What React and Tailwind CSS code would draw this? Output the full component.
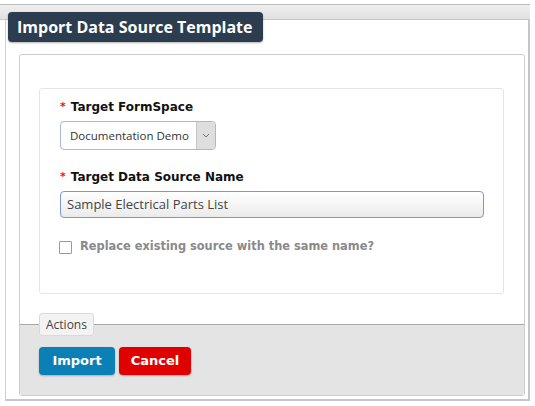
import React from "react";

export default function App() {
  return (
    <div className="w-[535px] h-[406px] bg-white pt-[4px] relative overflow-hidden">
      {/* header strip */}
      <div className="w-[530px] h-[16px] border-t border-b border-t-[#bcbcbc] border-b-[#c9c9c9] bg-gradient-to-b from-[#efefef] to-[#e1e1e1]" />
      {/* title tab */}
      <div
        className="absolute left-[8px] top-[12px] w-[255px] h-[30px] rounded-[4px] bg-[#2b3d4f] text-white font-bold text-[16px] leading-[30px] pl-[9px] shadow-[0_1px_2px_rgba(0,0,0,0.3)]"
        style={{ fontFamily: '"Open Sans", sans-serif' }}
      >
        Import Data Source Template
      </div>
      {/* body */}
      <div className="ml-[5px] w-[525px] h-[381px] border-l border-r-2 border-b-2 border-l-[#cfcfcf] border-r-[#c6c6c6] border-b-[#c6c6c6] pl-[13px] pr-[4px] pt-[34px]">
        <div className="w-[506px] h-[342px] border border-[#cdcdcd] rounded-[3px] overflow-hidden flex flex-col">
          <div className="pt-[33px] pl-[19px] pr-[20px]">
            <div
              className="h-[206px] border border-[#e4e4e4] rounded-[3px] pl-[20px] pr-[19px] pt-[10px]"
              style={{ fontFamily: '"DejaVu Sans", Verdana, sans-serif' }}
            >
              <div className="h-[16px] flex items-center text-[12px] font-bold text-[#111]">
                <span className="text-[#e02020] mr-[5px] text-[11px]">*</span>
                <span>Target FormSpace</span>
              </div>
              <div className="mt-[6px] w-[156px] h-[29px] border border-[#aab6d3] rounded-[4px] flex overflow-hidden bg-white">
                <div
                  className="flex-1 flex items-center pl-[9px] text-[11.5px] text-[#333] whitespace-nowrap overflow-hidden"
                  style={{ fontFamily: '"Open Sans", sans-serif' }}
                >
                  Documentation Demo
                </div>
                <div className="w-[19px] shrink-0 bg-[#dedede] border-l border-[#c8c8c8] flex items-center justify-center">
                  <svg width="8" height="5" viewBox="0 0 8 5">
                    <path d="M1 1 L4 4 L7 1" fill="none" stroke="#777" strokeWidth="1" />
                  </svg>
                </div>
              </div>
              <div className="mt-[19px] h-[16px] flex items-center text-[12px] font-bold text-[#111]">
                <span className="text-[#e02020] mr-[5px] text-[11px]">*</span>
                <span>Target Data Source Name</span>
              </div>
              <div
                className="mt-[6px] w-[424px] h-[27px] border border-[#7d97d6] rounded-[4px] bg-gradient-to-b from-white to-[#ebebeb] flex items-center pl-[6px] text-[13px] text-[#444]"
                style={{ fontFamily: '"Open Sans", sans-serif' }}
              >
                Sample Electrical Parts List
              </div>
              <div className="mt-[21px] h-[16px] flex items-center">
                <div className="w-[13px] h-[13px] border border-[#9a9a9a] rounded-[1px] bg-white ml-[-1px]" />
                <span className="ml-[8px] text-[11.4px] font-bold text-[#8a8a8a]">
                  Replace existing source with the same name?
                </span>
              </div>
            </div>
          </div>
          <div className="mt-[30px] flex-1 bg-[#e4e4e4] border-t border-[#a9a9a9] relative pl-[19px] pt-[22px]">
            <div
              className="absolute left-[19px] top-[-12px] h-[23px] px-[6px] bg-[#f3f3f3] border border-[#dadada] rounded-[3px] text-[12px] text-[#444] leading-[21px]"
              style={{ fontFamily: '"Open Sans", sans-serif' }}
            >
              Actions
            </div>
            <div className="flex gap-[4px]" style={{ fontFamily: '"DejaVu Sans", Verdana, sans-serif' }}>
              <div className="w-[76px] h-[28px] rounded-[4px] bg-[#0a80b6] text-white font-bold text-[13px] flex items-center justify-center shadow-[0_1px_2px_rgba(0,0,0,0.25)]">
                Import
              </div>
              <div className="w-[72px] h-[28px] rounded-[4px] bg-[#e00000] text-white font-bold text-[13px] flex items-center justify-center shadow-[0_1px_2px_rgba(0,0,0,0.25)]">
                Cancel
              </div>
            </div>
          </div>
        </div>
      </div>
    </div>
  );
}
